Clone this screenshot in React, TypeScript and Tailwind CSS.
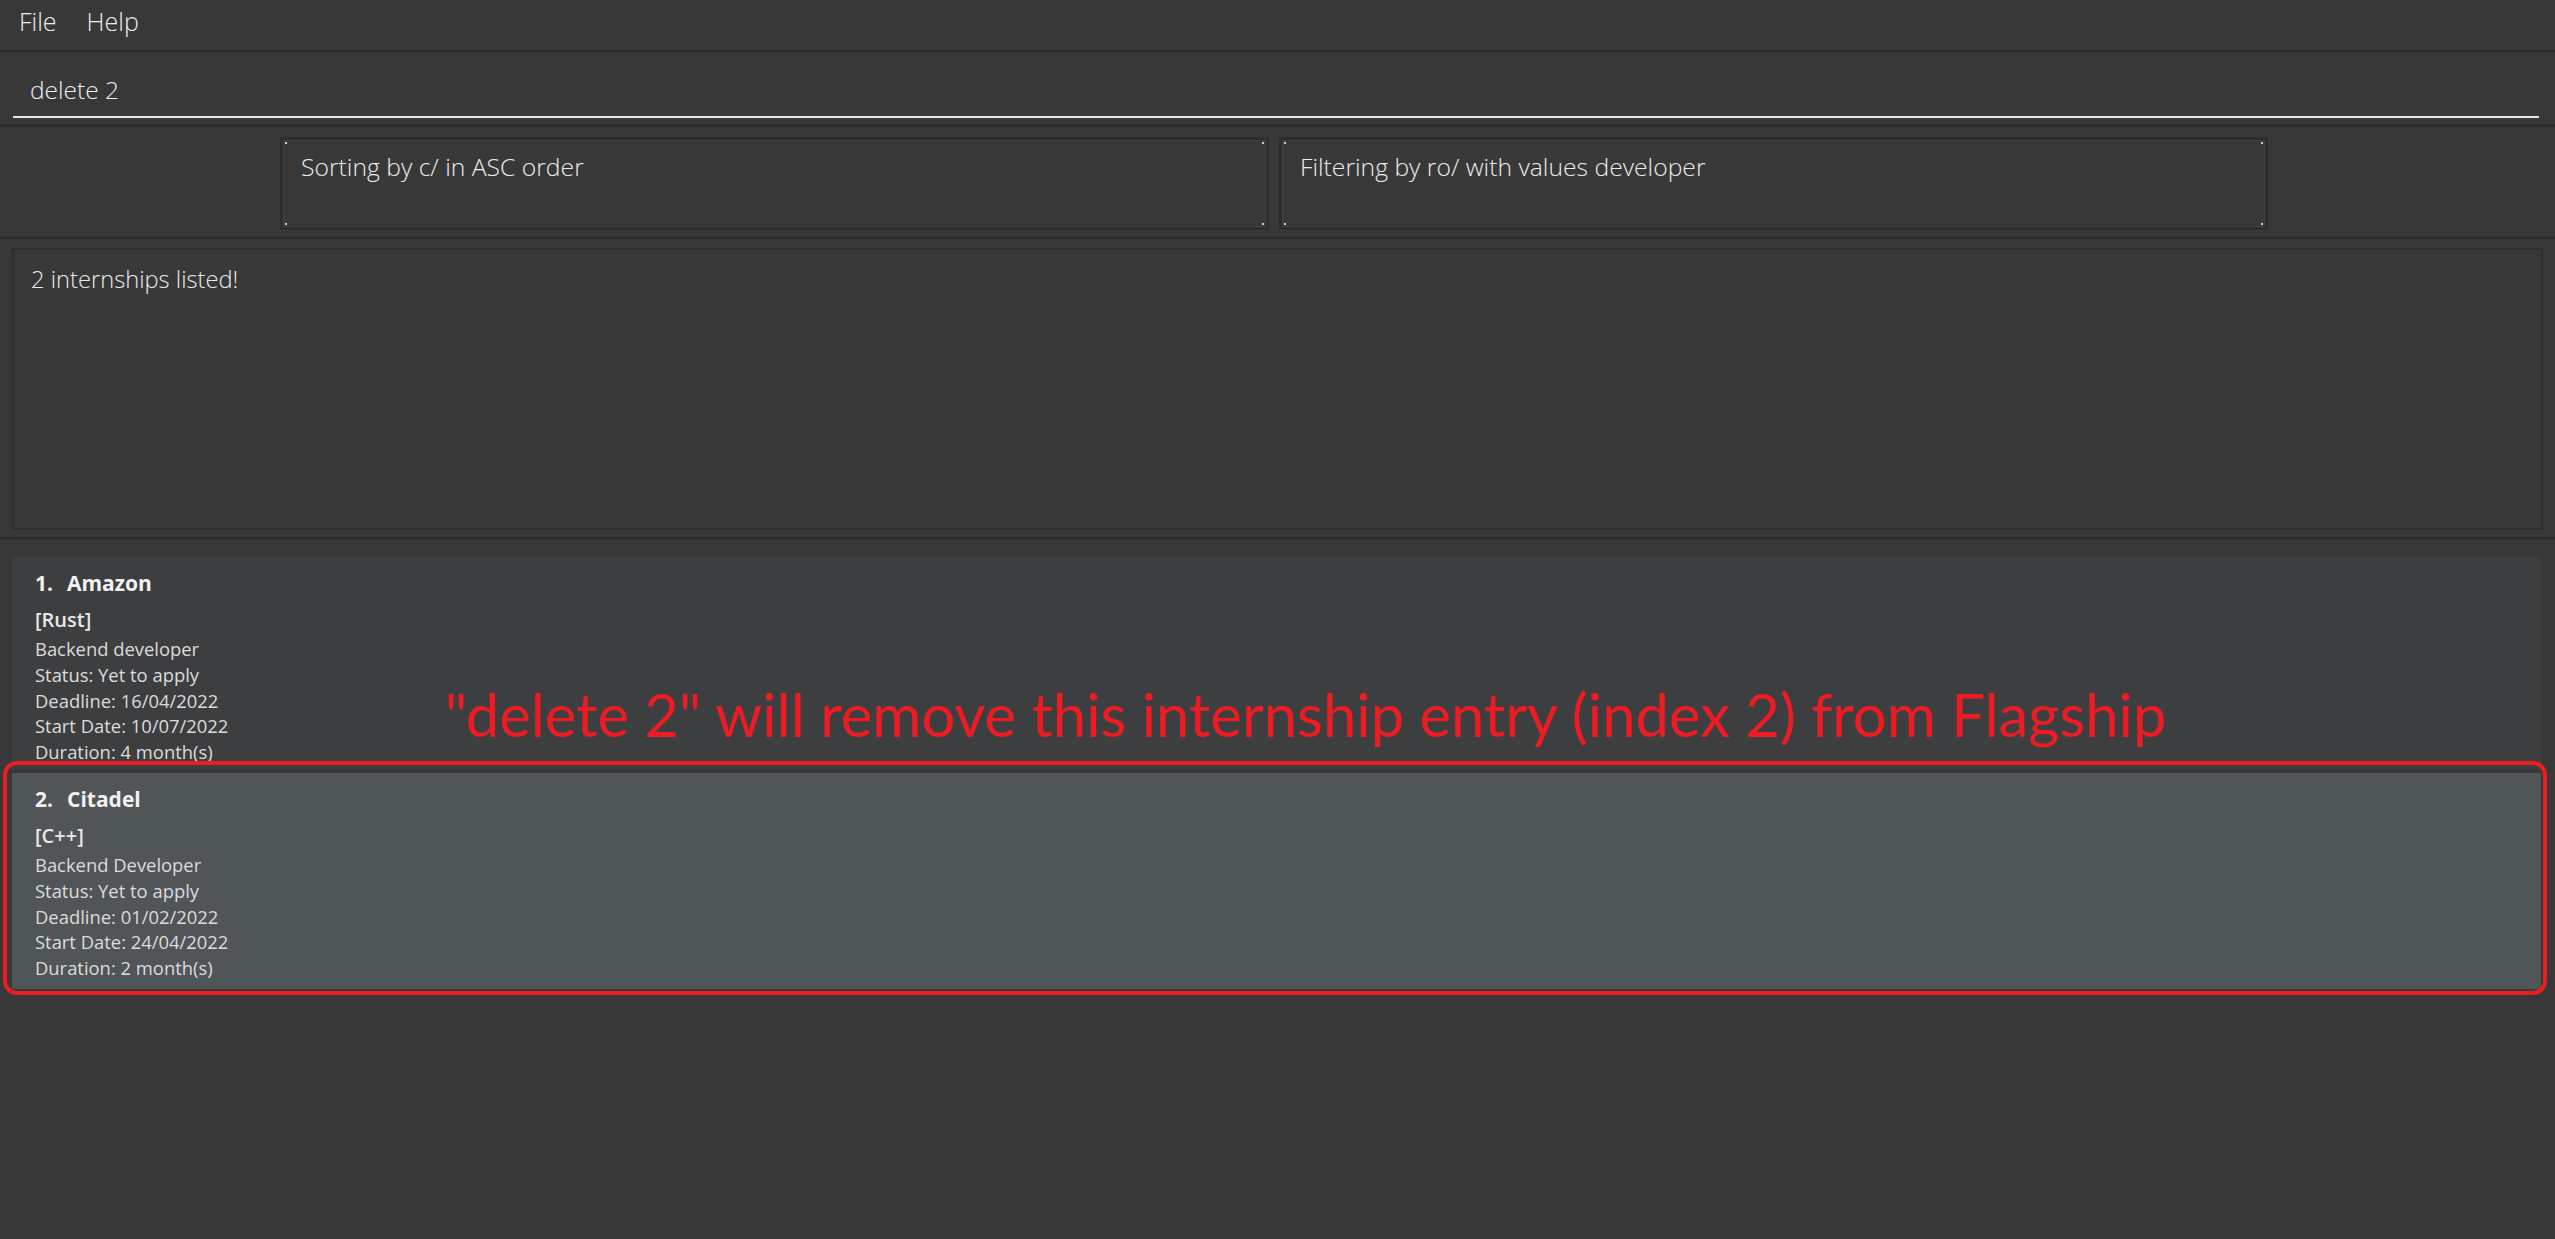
const cards = [
  {
    index: 1,
    company: "Amazon",
    tag: "Rust",
    role: "Backend developer",
    status: "Yet to apply",
    deadline: "16/04/2022",
    start: "10/07/2022",
    duration: "4 month(s)",
  },
  {
    index: 2,
    company: "Citadel",
    tag: "C++",
    role: "Backend Developer",
    status: "Yet to apply",
    deadline: "01/02/2022",
    start: "24/04/2022",
    duration: "2 month(s)",
  },
];

type Card = (typeof cards)[number];

const Dots = () => (
  <>
    <span className="absolute left-[2px] top-[2px] w-[2px] h-[2px] bg-[#cfcfcf]" />
    <span className="absolute right-[2px] top-[2px] w-[2px] h-[2px] bg-[#cfcfcf]" />
    <span className="absolute left-[2px] bottom-[2px] w-[2px] h-[2px] bg-[#cfcfcf]" />
    <span className="absolute right-[2px] bottom-[2px] w-[2px] h-[2px] bg-[#cfcfcf]" />
  </>
);

const InfoBox = ({ text }: { text: string }) => (
  <div className="relative w-[989px] h-[93px] border-[3px] border-[#2d2d2d] shadow-[inset_0_0_0_1px_#414141] bg-[#383838] pl-[18px] pt-[11px]">
    <Dots />
    <p className="text-[24.7px] leading-[32px] font-light text-[#ececec]">{text}</p>
  </div>
);

const InternshipCard = ({ card, selected }: { card: Card; selected?: boolean }) => (
  <div
    className={
      selected
        ? "h-[216px] bg-[#505558] pl-[23px] pt-[12px]"
        : "h-[212px] bg-[#3d3e40] pl-[23px] pt-[12px]"
    }
  >
    <div className="flex text-[21px] leading-[28px] font-bold text-[#f2f2f2]">
      <span className="w-[32px]">{card.index}.</span>
      <span>{card.company}</span>
    </div>
    <div className="mt-[7px] text-[20px] leading-[32px] font-semibold text-[#e8e8e8]">[{card.tag}]</div>
    <div className="text-[18.4px] leading-[25.75px] text-[#dcdcdc]">
      <div>{card.role}</div>
      <div>Status: {card.status}</div>
      <div>Deadline: {card.deadline}</div>
      <div>Start Date: {card.start}</div>
      <div>Duration: {card.duration}</div>
    </div>
  </div>
);

export default function App() {
  return (
    <div className="w-[2555px] h-[1239px] bg-[#383838] flex flex-col overflow-hidden font-['Open_Sans','Noto_Sans',sans-serif]">
      {/* menu bar */}
      <div className="h-[52px] flex items-center gap-[30px] pl-[19px] pb-[6px] border-b-2 border-[#2a2a2a] text-[25px] font-light text-[#eeeeee]">
        <span>File</span>
        <span>Help</span>
      </div>

      {/* command box */}
      <div className="px-[13px] pt-[22px] pb-[6px] border-b-[3px] border-[#2c2c2c]">
        <div className="pl-[17px] pb-[10px] border-b-2 border-[#e6e6e6] mr-[3px] text-[24.5px] leading-[32px] font-light text-[#f0f0f0]">
          delete 2
        </div>
      </div>

      {/* sort / filter */}
      <div className="flex gap-[10px] pl-[280px] pt-[10px] pb-[7px] border-b-2 border-[#2c2c2c]">
        <InfoBox text="Sorting by c/ in ASC order" />
        <InfoBox text="Filtering by ro/ with values developer" />
      </div>

      {/* result display */}
      <div className="px-[12px] pt-[9px] pb-[7px] border-b-2 border-[#2c2c2c]">
        <div className="h-[282px] border-2 border-[#2e2e2e] pl-[17px] pt-[13px]">
          <p className="text-[23.7px] leading-[32px] font-light text-[#ececec]">2 internships listed!</p>
        </div>
      </div>

      {/* internship list */}
      <div className="flex-1 pl-[12px] pr-[14px] pt-[18px] flex flex-col gap-[4px]">
        <div className="relative">
          <InternshipCard card={cards[0]} />
          <p className="absolute left-[433px] top-[123px] whitespace-nowrap font-['Lato','Open_Sans',sans-serif] text-[59.8px] leading-[68px] text-[#ed1c24]">
            "delete 2" will remove this internship entry (index 2) from Flagship
          </p>
        </div>
        <div className="relative">
          <InternshipCard card={cards[1]} selected />
          <div className="absolute left-[-9px] right-[-6px] top-[-12px] bottom-[-6px] border-4 border-[#ed1c24] rounded-[14px]" />
        </div>
      </div>
    </div>
  );
}
